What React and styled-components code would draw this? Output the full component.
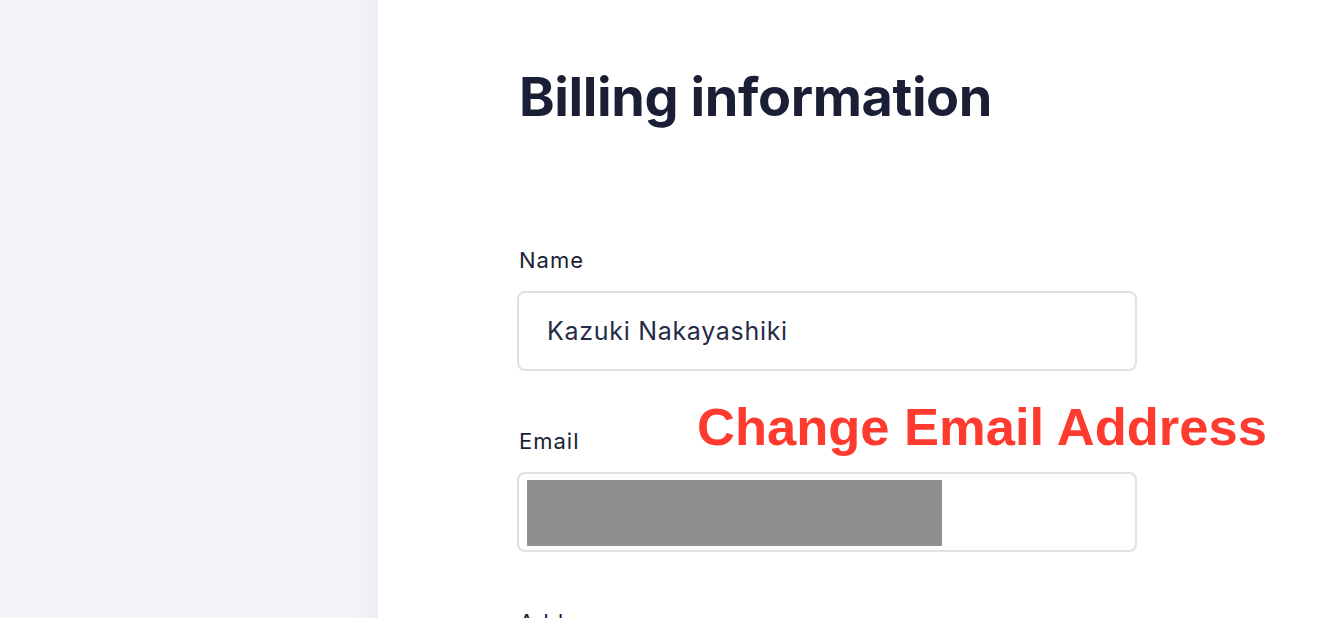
import React from 'react';
import styled, { createGlobalStyle } from 'styled-components';

// Global
const GlobalStyle = createGlobalStyle`
	html, body, #root {
		margin: 0;
		padding: 0;
		height: 100%;
	}
	body {
		font-family: Inter, "Noto Sans", sans-serif;
		background: #ffffff;
		overflow: hidden;
	}
`;

// Style
const Page = styled.div`
	display: flex;
	height: 618px;
	width: 1320px;
	position: relative;
	overflow: hidden;
`;

const Sidebar = styled.aside`
	width: 378px;
	flex-shrink: 0;
	background: linear-gradient(to right, #f4f5f8 0%, #f4f5f8 94%, #eceef2 100%);
`;

const Main = styled.main`
	flex: 1;
	padding: 60px 0 0 139px;
`;

const Title = styled.h1`
	margin: 0 0 115px 2px;
	font-size: 54px;
	line-height: 74px;
	font-weight: 700;
	color: #1a1f36;
	letter-spacing: -0.4px;
`;

const Form = styled.form`
	width: 620px;
	display: flex;
	flex-direction: column;
	gap: 59px;
`;

const Field = styled.div`
	display: flex;
	flex-direction: column;
	gap: 20px;
`;

const Label = styled.label`
	font-size: 22px;
	line-height: 22px;
	font-weight: 400;
	color: #1a1f36;
	padding-left: 2px;
	letter-spacing: 1px;
`;

const Input = styled.div`
	box-sizing: border-box;
	height: 80px;
	border: 2px solid #dfe1e6;
	border-radius: 8px;
	display: flex;
	align-items: center;
	padding: 0 ${(p) => (p.$masked ? '8px' : '28px')};
	font-size: 25px;
	letter-spacing: 0.7px;
	color: #262b47;
	background: #fff;
`;

const Mask = styled.div`
	width: 415px;
	height: 66px;
	margin-top: 2px;
	background: #8f8f8f;
`;

const Annotation = styled.div`
	position: absolute;
	left: 697px;
	top: 397px;
	font-family: "Liberation Sans", Arial, sans-serif;
	font-weight: 700;
	font-size: 52.5px;
	line-height: 60px;
	color: #ff3b30;
	white-space: nowrap;
`;

// Render
export default function App() {
	return (
		<>
			<GlobalStyle />
			<Page>
				<Sidebar />
				<Main>
					<Title>Billing information</Title>
					<Form>
						<Field>
							<Label>Name</Label>
							<Input>Kazuki Nakayashiki</Input>
						</Field>
						<Field>
							<Label>Email</Label>
							<Input $masked>
								<Mask />
							</Input>
						</Field>
						<Field>
							<Label>Address</Label>
							<Input />
						</Field>
					</Form>
				</Main>
				<Annotation>Change Email Address</Annotation>
			</Page>
		</>
	);
}
